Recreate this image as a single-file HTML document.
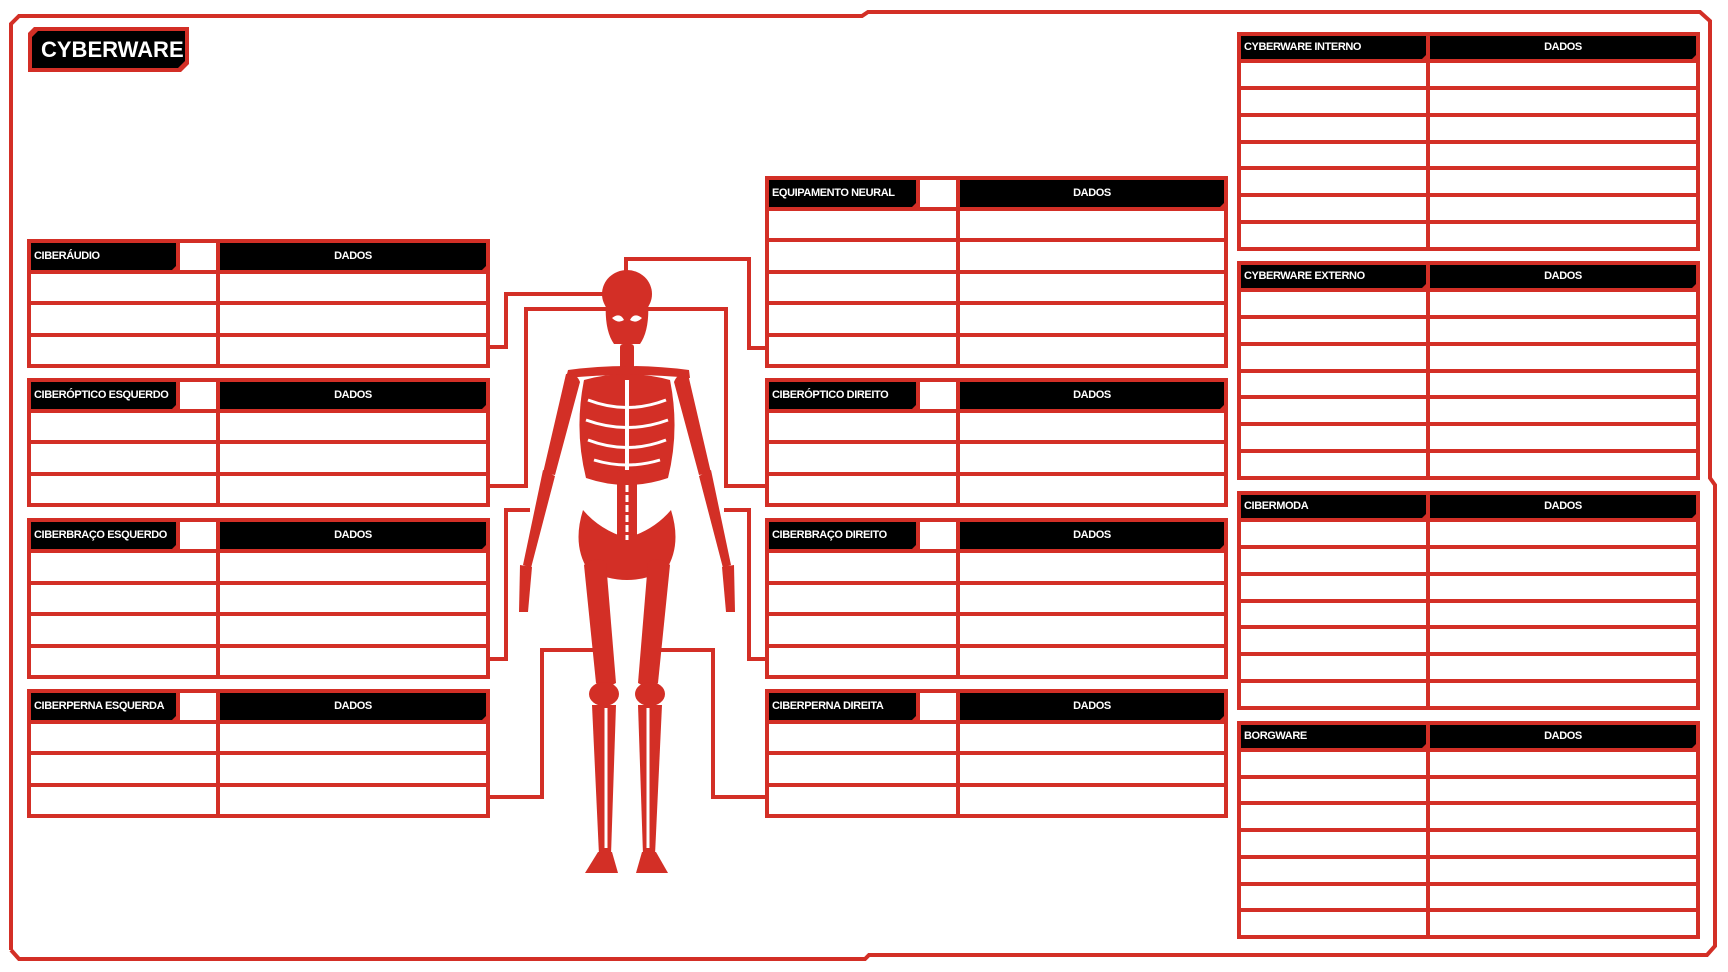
<!DOCTYPE html>
<html><head><meta charset="utf-8">
<style>
html,body{margin:0;padding:0;background:#fff;width:1728px;height:972px;overflow:hidden;position:relative;font-family:"Liberation Sans",sans-serif}
.t{position:absolute;background:#d32f26;}
.c{position:absolute;background:#fff;}
.h{position:absolute;background:#000;color:#fff;font-weight:bold;font-size:11px;line-height:1;display:flex;align-items:center;letter-spacing:-0.4px;clip-path:polygon(0 0,100% 0,100% calc(100% - 4px),calc(100% - 4px) 100%,0 100%)}
svg{position:absolute;left:0;top:0}
</style></head><body>
<svg width="1728" height="972" viewBox="0 0 1728 972">
<g fill="none" stroke="#d32f26" stroke-width="4">
<path d="M11,950 V24 L19,16 H862 L868,12 H1700 L1710,21 V478 L1715,485 V946 L1707,955 H869 L865,959 H19 L11,950"/>
<path d="M490,347 H506 V294 H606"/>
<path d="M490,486 H526 V309 H610"/>
<path d="M646,309 H726 V486 H765"/>
<path d="M626,272 V259 H749 V348 H765"/>
<path d="M490,659 H506 V510 H530"/>
<path d="M724,510 H749 V659 H765"/>
<path d="M490,797 H542 V650 H596"/>
<path d="M658,650 H713 V797 H765"/>
</g>
<g fill="#d32f26" stroke="none">
<ellipse cx="627" cy="294" rx="25" ry="24"/>
<path d="M606,300 Q604,330 614,344 H640 Q650,330 648,300 Z"/>
<rect x="620" y="344" width="14" height="28" rx="3"/>
<path d="M568,370 Q627,362 689,370 L690,378 Q627,372 566,378 Z"/>
<path d="M584,380 Q627,368 670,380 Q680,430 668,478 Q627,492 586,478 Q574,430 584,380Z"/>
<rect x="617" y="470" width="20" height="75" rx="4"/>
<path d="M583,510 Q600,530 627,538 Q654,530 671,510 Q682,545 666,570 Q627,590 588,570 Q572,545 583,510Z"/>
<path d="M584,565 Q596,555 606,562 L616,683 Q604,690 596,683 Z"/>
<path d="M670,565 Q658,555 648,562 L638,683 Q650,690 658,683 Z"/>
<ellipse cx="604" cy="694" rx="15" ry="12"/>
<ellipse cx="650" cy="694" rx="15" ry="12"/>
<path d="M592,705 H616 L611,855 H599 Z"/>
<path d="M638,705 H662 L655,855 H643 Z"/>
<path d="M598,852 H612 L618,873 H585 Z"/>
<path d="M642,852 H656 L668,873 H636 Z"/>
<path d="M566,374 Q576,372 580,382 L555,475 L543,473 Z"/>
<path d="M688,374 Q678,372 674,382 L699,475 L711,473 Z"/>
<path d="M543,470 L555,476 L531,568 L523,565 Z"/>
<path d="M711,470 L699,476 L723,568 L731,565 Z"/>
<path d="M520,565 L532,567 L528,612 L519,612 Z"/>
<path d="M734,565 L722,567 L726,612 L735,612 Z"/>
</g>
<g fill="none" stroke="#fff" stroke-width="3">
<path d="M588,400 Q627,415 666,400 M586,420 Q627,435 668,420 M588,440 Q627,455 666,440 M594,460 Q627,470 660,460"/>
<path d="M627,380 V470" stroke-width="4"/>
<path d="M627,485 V540" stroke-dasharray="7,3"/>
<path d="M606,708 V848 M648,708 V848"/>
</g>
<g fill="#fff"><path d="M612,318 Q620,312 624,320 Q618,324 612,318Z M642,318 Q634,312 630,320 Q636,324 642,318Z"/></g>
</svg>
<div style="position:absolute;left:28px;top:27px;width:161px;height:45px;background:#d32f26;clip-path:polygon(6px 0,100% 0,100% calc(100% - 8px),calc(100% - 8px) 100%,0 100%,0 6px)"></div>
<div style="position:absolute;left:32px;top:31px;width:153px;height:37px;background:#000;color:#fff;font-weight:bold;font-size:22px;display:flex;align-items:center;padding-left:9px;box-sizing:border-box;clip-path:polygon(6px 0,100% 0,100% calc(100% - 7px),calc(100% - 7px) 100%,0 100%,0 6px)">CYBERWARE</div>
<div id="root"></div>
<script>
function T(x,y,w,h,rows,title,split,box,hh){
 var r=document.getElementById('root');
 var t=document.createElement('div');t.className='t';
 t.style.cssText='left:'+x+'px;top:'+y+'px;width:'+w+'px;height:'+h+'px';
 r.appendChild(t);
 var iw=w-8, c2=split+4, w2=iw-c2;
 var nameW=box?split-40:split;
 var hd=document.createElement('div');hd.className='h';
 hd.style.cssText='left:4px;top:4px;width:'+nameW+'px;height:'+hh+'px;padding-left:3px;box-sizing:border-box';
 hd.textContent=title;t.appendChild(hd);
 if(box){var b=document.createElement('div');b.className='c';b.style.cssText='left:'+(4+split-36)+'px;top:4px;width:36px;height:'+hh+'px';t.appendChild(b);}
 var d=document.createElement('div');d.className='h';
 d.style.cssText='left:'+(4+c2)+'px;top:4px;width:'+w2+'px;height:'+hh+'px;justify-content:center';
 d.textContent='DADOS';t.appendChild(d);
 var rh=(h-8-hh-rows*4)/rows;
 for(var i=0;i<rows;i++){
  var yy=4+hh+4+i*(rh+4);
  var a=document.createElement('div');a.className='c';a.style.cssText='left:4px;top:'+yy+'px;width:'+split+'px;height:'+rh+'px';t.appendChild(a);
  var e=document.createElement('div');e.className='c';e.style.cssText='left:'+(4+c2)+'px;top:'+yy+'px;width:'+w2+'px;height:'+rh+'px';t.appendChild(e);
 }
}
T(27,239,463,129,3,'CIBERÁUDIO',185,1,27);
T(27,378,463,129,3,'CIBERÓPTICO ESQUERDO',185,1,27);
T(27,518,463,161,4,'CIBERBRAÇO ESQUERDO',185,1,27);
T(27,689,463,129,3,'CIBERPERNA ESQUERDA',185,1,27);
T(765,176,463,192,5,'EQUIPAMENTO NEURAL',187,1,27);
T(765,378,463,129,3,'CIBERÓPTICO DIREITO',187,1,27);
T(765,518,463,161,4,'CIBERBRAÇO DIREITO',187,1,27);
T(765,689,463,129,3,'CIBERPERNA DIREITA',187,1,27);
T(1237,32,463,219,7,'CYBERWARE INTERNO',185,0,23);
T(1237,261,463,219,7,'CYBERWARE EXTERNO',185,0,23);
T(1237,491,463,219,7,'CIBERMODA',185,0,23);
T(1237,721,463,218,7,'BORGWARE',185,0,23);
</script>
</body></html>
